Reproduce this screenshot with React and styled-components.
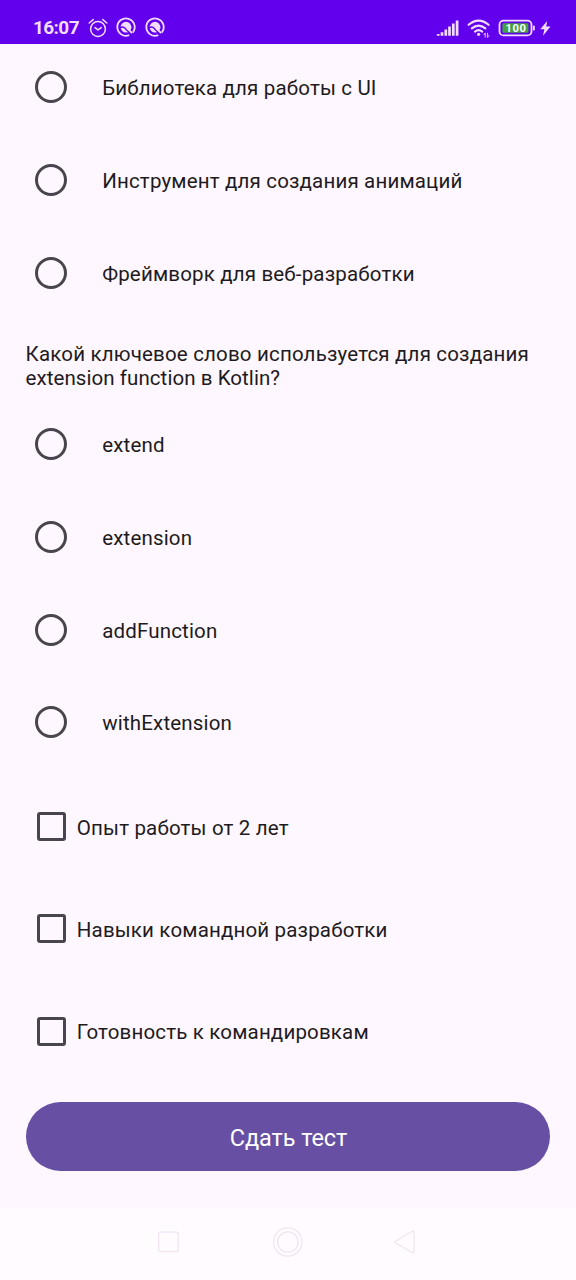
import React from "react";
import styled, { createGlobalStyle } from "styled-components";

const GlobalStyle = createGlobalStyle`
  * { box-sizing: border-box; }
  body { margin: 0; background: #fef7ff; font-family: Roboto, "Noto Sans", sans-serif; }
`;

const Screen = styled.div`
  width: 576px;
  height: 1280px;
  display: flex;
  flex-direction: column;
  overflow: hidden;
  background: #fef7ff;
  color: #1d1b20;
`;

const StatusBar = styled.header`
  flex: none;
  height: 44px;
  padding: 12px 25px 0 33px;
  display: flex;
  justify-content: space-between;
  background: #6200ee;
  color: #f3dcff;
`;

const StatusGroup = styled.div`
  display: flex;
  height: 32px;
`;

const Clock = styled.span`
  width: 55px;
  font-size: 19px;
  letter-spacing: -0.6px;
  line-height: 32px;
  font-weight: 700;
`;

const StatusIcon = styled.svg`
  display: block;
  height: 32px;
  width: ${(p) => p.$width}px;
  margin-right: ${(p) => p.$gap || 0}px;
  fill: none;
  stroke: currentColor;
  stroke-linecap: ${(p) => p.$cap || "round"};
  stroke-linejoin: round;
`;

const Content = styled.main`
  height: 1163.5px;
  flex: none;
  padding: 8px 25.6px 0;
`;

const RadioGroup = styled.div`
  display: flex;
  flex-direction: column;
  gap: 22.4px;
`;

const RadioRow = styled.label`
  height: 70.4px;
  display: flex;
  align-items: center;
  gap: 35.2px;
  padding-left: 9.4px;
`;

const RadioMark = styled.span`
  width: 32px;
  height: 32px;
  border: 3px solid #49454f;
  border-radius: 50%;
`;

const Label = styled.span`
  font-size: 20.53px;
  line-height: 24px;
  letter-spacing: 0.16px;
  white-space: nowrap;
  padding-top: 2px;
`;

const Question = styled.p`
  margin: 34px 0 19px;
  font-size: 20.53px;
  line-height: 24px;
  letter-spacing: 0.17px;
  white-space: nowrap;
`;

const QuestionTail = styled.span`
  letter-spacing: 0.06px;
`;

const CheckList = styled.div`
  display: flex;
  flex-direction: column;
  gap: 31.9px;
  margin-top: 33.8px;
`;

const CheckRow = styled.label`
  height: 70.4px;
  display: flex;
  align-items: center;
  gap: 11px;
  padding-left: 11.2px;
`;

const CheckMark = styled.span`
  width: 29px;
  height: 29px;
  border: 3px solid #49454f;
  border-radius: 3px;
`;

const SubmitButton = styled.button`
  display: block;
  width: 100%;
  height: 69px;
  margin-top: 35.4px;
  padding: 3px 0 0 1px;
  border: 0;
  border-radius: 35px;
  background: #6750a4;
  color: #fff;
  font: 400 23.46px/28px Roboto, "Noto Sans", sans-serif;
  letter-spacing: -0.06px;
`;

const NavBar = styled.nav`
  flex: 1;
  display: flex;
  justify-content: center;
  align-items: center;
  padding-bottom: 4px;
  background: #fffbff;
`;

const NavIcon = styled.svg`
  width: 118px;
  height: 32px;
  fill: none;
  stroke: #efe5ef;
  stroke-width: 1.2;
  stroke-linejoin: round;
`;

const firstAnswers = [
  "Библиотека для работы с UI",
  "Инструмент для создания анимаций",
  "Фреймворк для веб-разработки",
];
const secondAnswers = ["extend", "extension", "addFunction", "withExtension"];
const requirements = [
  "Опыт работы от 2 лет",
  "Навыки командной разработки",
  "Готовность к командировкам",
];

function Answers({ items }) {
  return (
    <RadioGroup role="radiogroup">
      {items.map((text) => (
        <RadioRow key={text}>
          <RadioMark />
          <Label>{text}</Label>
        </RadioRow>
      ))}
    </RadioGroup>
  );
}

function AlarmIcon() {
  return (
    <StatusIcon $width={20} $gap={8} viewBox="0 0 20 32" strokeWidth="1.5">
      <circle cx="10" cy="17" r="7.4" />
      <path d="M7 15.6l3 2.3 3.3-2.3M1.2 11l4-3.4M18.8 11l-4-3.4" />
    </StatusIcon>
  );
}

function AppBadgeIcon({ gap }) {
  return (
    <StatusIcon $width={20} $gap={gap} viewBox="0 0 20 32">
      <path d="M12.6 23.4A8.7 8.7 0 1 1 17.2 20" strokeWidth="1.8" />
      <circle cx="10" cy="15.2" r="5.4" fill="currentColor" stroke="none" />
      <path d="M4.2 15.6q3.2-1.6 5 .8t3.4 3.2" stroke="#6200ee" strokeWidth="1.4" />
      <path d="M12.2 17l3.4 3.6" strokeWidth="1.8" />
    </StatusIcon>
  );
}

function SignalIcon() {
  return (
    <StatusIcon $width={23} $gap={8} $cap="butt" viewBox="0 0 23 32" strokeWidth="2.7">
      <path d="M2.2 22v1.8M6 20.2v3.6M9.8 17.4v6.4M13.5 14.6v9.2M17.3 11.6v12.2M21.1 8.4v15.4" />
    </StatusIcon>
  );
}

function WifiIcon() {
  return (
    <StatusIcon $width={24} $gap={7} viewBox="0 0 24 32" strokeWidth="2.1">
      <path d="M1.6 12.8q10-8.2 20 0M4.8 16.4q6.8-5.7 13.6 0M8 19.6q3.6-2.8 7.2 0" />
      <circle cx="11.6" cy="22.3" r="1.6" fill="currentColor" stroke="none" />
      <path d="M18.2 21.3v3.8m-1.3-2.4l1.3-1.4M20.6 21.3v3.8m1.3-1.4l-1.3 1.4" strokeWidth="0.9" />
    </StatusIcon>
  );
}

function BatteryIcon() {
  return (
    <StatusIcon $width={37} $gap={5} viewBox="0 0 37 32">
      <rect x="1.5" y="8.6" width="32" height="14.8" rx="4" strokeWidth="1.8" />
      <rect x="4.4" y="11.2" width="26" height="9.6" rx="1.6" fill="#43a047" stroke="none" />
      <path d="M35.9 14.5v3.2" strokeWidth="1.8" />
      <text x="18" y="20" textAnchor="middle" fontFamily="Roboto, sans-serif" fontSize="11.2" fontWeight="700" letterSpacing="0.5" fill="#fff" stroke="none">100</text>
    </StatusIcon>
  );
}

function BoltIcon() {
  return (
    <StatusIcon $width={11} viewBox="0 0 11 32">
      <path d="M7.2 8.9L.2 17.2h4.2L3 23.8l7.5-9.2H6.2z" fill="currentColor" stroke="none" />
    </StatusIcon>
  );
}

export default function App() {
  return (
    <>
      <GlobalStyle />
      <Screen>
        <StatusBar>
          <StatusGroup>
            <Clock>16:07</Clock>
            <AlarmIcon />
            <AppBadgeIcon gap={9} />
            <AppBadgeIcon gap={0} />
          </StatusGroup>
          <StatusGroup>
            <SignalIcon />
            <WifiIcon />
            <BatteryIcon />
            <BoltIcon />
          </StatusGroup>
        </StatusBar>
        <Content>
          <Answers items={firstAnswers} />
          <Question>
            Какой ключевое слово используется для создания
            <br />
            <QuestionTail>extension function в Kotlin?</QuestionTail>
          </Question>
          <Answers items={secondAnswers} />
          <CheckList>
            {requirements.map((text) => (
              <CheckRow key={text}>
                <CheckMark />
                <Label>{text}</Label>
              </CheckRow>
            ))}
          </CheckList>
          <SubmitButton type="button">Сдать тест</SubmitButton>
        </Content>
        <NavBar>
          <NavIcon viewBox="0 0 118 32">
            <rect x="47.7" y="6.2" width="19.5" height="19.5" rx="1.5" />
          </NavIcon>
          <NavIcon viewBox="0 0 118 32">
            <circle cx="58.8" cy="16" r="14.2" />
            <circle cx="58.8" cy="16" r="10.2" />
          </NavIcon>
          <NavIcon viewBox="0 0 118 32">
            <path d="M65.1 5.5q2-1 2 1v19q0 2-2 1L48.6 17q-1.5-1 0-2z" />
          </NavIcon>
        </NavBar>
      </Screen>
    </>
  );
}
